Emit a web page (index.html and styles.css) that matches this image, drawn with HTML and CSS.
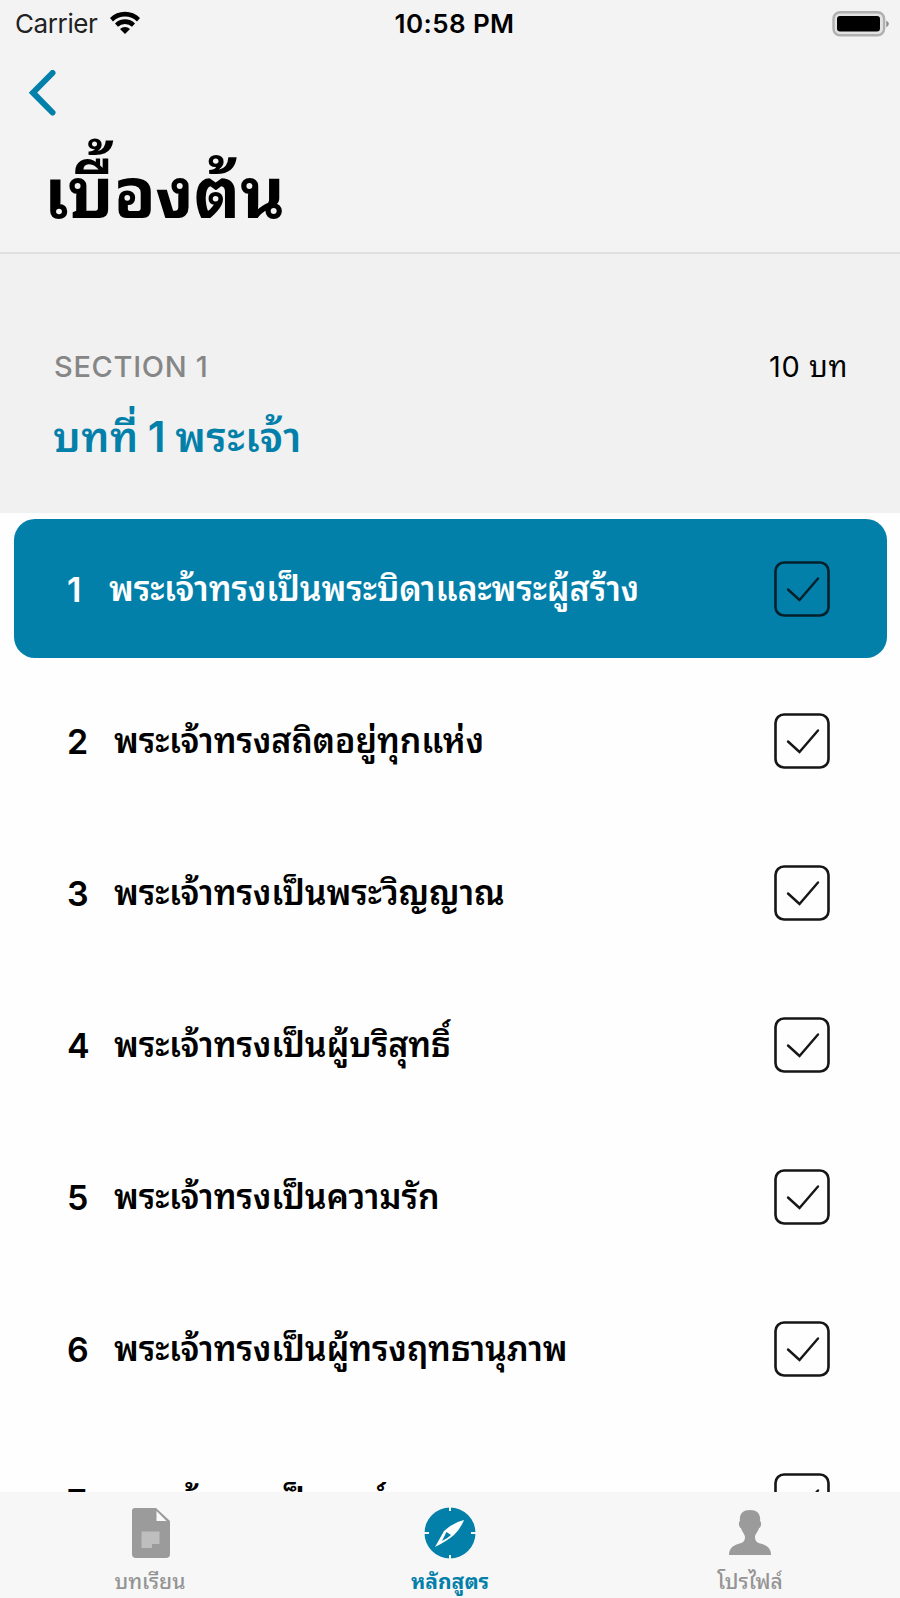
FILE: index.html
```html
<!DOCTYPE html>
<html lang="th">
<head>
    <meta charset="UTF-8">
    <meta name="viewport" content="width=device-width, initial-scale=1.0">
    <title>เบื้องต้น</title>
    <link rel="stylesheet" href="styles.css">
</head>
<body>
    <svg class="sprite" width="0" height="0">
        <symbol id="check" viewBox="0 0 56 56">
            <rect x="1.5" y="1.5" width="53" height="53" rx="8.5" fill="none" stroke="currentColor" stroke-width="2.6"/>
            <path d="M14 28.5 L25.5 39 L44 17.5" fill="none" stroke="currentColor" stroke-width="2.4" stroke-linecap="round"/>
        </symbol>
    </svg>
    <div class="app">
        <header class="header">
            <div class="status">
                <div class="carrier">
                    <span>Carrier</span>
                    <svg width="32" height="24" viewBox="0 0 32 24">
                        <path d="M1 7 A21 21 0 0 1 31 7 L28 10.500 A17 17 0 0 0 4 10.500 Z"/>
                        <path d="M6 12.500 A14 14 0 0 1 26 12.500 L23 15.800 A10 10 0 0 0 9 15.800 Z"/>
                        <path d="M11 18 A7.500 7.500 0 0 1 21 18 L16 23 Z"/>
                    </svg>
                </div>
                <span class="clock">10:58 PM</span>
                <svg class="battery" width="58" height="26" viewBox="0 0 58 26">
                    <rect x="1.5" y="1.2" width="50.6" height="23" rx="6.5" fill="#e2e2e2" stroke="#b0b0b0" stroke-width="2.4"/>
                    <rect x="5" y="5" width="43" height="15.5" rx="3"/>
                    <path d="M54.3 9.5 Q59.5 12.7 54.3 16.5 Z" fill="#8b8b8b"/>
                </svg>
            </div>
            <div class="back">
                <svg width="28" height="46" viewBox="0 0 28 46">
                    <path d="M23.500 3 L4 22.700 L23.500 42.500" fill="none" stroke="#0280aa" stroke-width="6" stroke-linecap="round"/>
                </svg>
            </div>
            <h1>เบื้องต้น</h1>
        </header>

        <section class="section">
            <div class="section-top">
                <span class="section-label">SECTION 1</span>
                <span class="section-count">10 บท</span>
            </div>
            <h2>บทที่ 1 พระเจ้า</h2>
        </section>

        <main class="list">
            <div class="row active">
                <span class="num">1</span>
                <span class="name">พระเจ้าทรงเป็นพระบิดาและพระผู้สร้าง</span>
                <svg class="check"><use href="#check"/></svg>
            </div>
            <div class="row">
                <span class="num">2</span>
                <span class="name">พระเจ้าทรงสถิตอยู่ทุกแห่ง</span>
                <svg class="check"><use href="#check"/></svg>
            </div>
            <div class="row">
                <span class="num">3</span>
                <span class="name">พระเจ้าทรงเป็นพระวิญญาณ</span>
                <svg class="check"><use href="#check"/></svg>
            </div>
            <div class="row">
                <span class="num">4</span>
                <span class="name">พระเจ้าทรงเป็นผู้บริสุทธิ์</span>
                <svg class="check"><use href="#check"/></svg>
            </div>
            <div class="row">
                <span class="num">5</span>
                <span class="name">พระเจ้าทรงเป็นความรัก</span>
                <svg class="check"><use href="#check"/></svg>
            </div>
            <div class="row">
                <span class="num">6</span>
                <span class="name">พระเจ้าทรงเป็นผู้ทรงฤทธานุภาพ</span>
                <svg class="check"><use href="#check"/></svg>
            </div>
            <div class="row">
                <span class="num">7</span>
                <span class="name">พระเจ้าทรงเป็นองค์</span>
                <svg class="check"><use href="#check"/></svg>
            </div>
        </main>

        <nav class="tabs">
            <div class="tab">
                <svg width="52" height="52" viewBox="0 0 52 52">
                    <path d="M11 1 H32 L46 14 V47 Q46 51 42 51 H12 Q8 51 8 47 V4 Q8 1 11 1 Z" fill="#9b9b9b"/>
                    <path d="M32.500 4 V14 H42.500 Z" fill="#fafafa"/>
                    <path d="M17.500 24.500 H35.500 V37 H28 V41 H17.500 Z" fill="#bebebe"/>
                </svg>
                <span>บทเรียน</span>
            </div>
            <div class="tab selected">
                <svg width="52" height="52" viewBox="0 0 52 52">
                    <circle cx="26" cy="26" r="25.500" fill="#0280aa"/>
                    <path d="M26 0 V4 M26 48 V52 M0 26 H5 M47 26 H52" stroke="#f6f6f6" stroke-width="2"/>
                    <path d="M40 13 Q30 15 20 24 L11 40 Q23 34 30 28 Q37 21 40 13 Z" fill="#fff"/>
                    <path d="M22.500 25 L27 28 Q24 31 18 34 Z" fill="#0280aa"/>
                </svg>
                <span>หลักสูตร</span>
            </div>
            <div class="tab">
                <svg width="52" height="52" viewBox="0 0 52 52">
                    <path d="M26 3 C33 3 37 7 36 14 C38 15 37 21 35 21 C34 25 31 27 31 30 C31 35 34 36 38 37 C44 39 47 42 47 48 H5 C5 42 8 39 14 37 C18 36 21 35 21 30 C21 27 18 25 17 21 C15 21 14 15 16 14 C15 7 19 3 26 3 Z" fill="#9b9b9b"/>
                </svg>
                <span>โปรไฟล์</span>
            </div>
        </nav>
    </div>
</body>
</html>
```
FILE: styles.css
```css
* {
    box-sizing: border-box;
}

body {
    margin: 0;
    background-color: #fff;
    color: #000;
    font-family: Inter, Thonburi, "Noto Sans Thai Looped", Loma, Garuda, "Noto Sans Thai", "Liberation Sans", sans-serif;
}

.sprite {
    display: none;
}

.app {
    display: flex;
    flex-direction: column;
    width: 900px;
    height: 1598px;
    overflow: hidden;
    background-color: #fefefe;
}

/* ---------- header ---------- */
.header {
    flex: none;
    height: 254px;
    background-color: #f3f3f3;
    border-bottom: 2px solid #e0e0e0;
}

.status {
    display: grid;
    grid-template-columns: 1fr auto 1fr;
    align-items: center;
    height: 47px;
    padding: 0 10px 0 15px;
    font-size: 26px;
}

.carrier {
    display: flex;
    align-items: center;
    gap: 12px;
    color: #222;
    letter-spacing: -0.4px;
}

.carrier svg {
    margin-bottom: 2px;
}

.clock {
    padding-left: 4px;
    font-weight: 600;
    letter-spacing: 0.4px;
}

.battery {
    justify-self: end;
}

.back {
    height: 46px;
    margin-top: 23px;
    padding-left: 29px;
}

h1 {
    margin: 17px 0 0;
    padding-left: 44px;
    font-size: 69px;
    line-height: 120px;
    font-weight: 700;
    letter-spacing: -0.3px;
}

/* ---------- section ---------- */
.section {
    flex: none;
    height: 259px;
    padding: 93px 52px 0 53px;
    background-color: #f1f1f1;
}

.section-top {
    display: flex;
    justify-content: space-between;
    font-size: 29px;
    line-height: 40px;
}

.section-label {
    padding-left: 1px;
    color: #868686;
    font-weight: 500;
    letter-spacing: 0.7px;
}

.section-count {
    letter-spacing: 0.6px;
}

h2 {
    margin: 20px 0 0;
    color: #0280aa;
    font-size: 42px;
    line-height: 60px;
    font-weight: 600;
    letter-spacing: 0.5px;
    word-spacing: -2px;
}

/* ---------- list ---------- */
.list {
    flex: 1;
    display: flex;
    flex-direction: column;
    gap: 13px;
    min-height: 0;
    padding: 6px 13px 0 14px;
    overflow: hidden;
}

.row {
    flex: none;
    display: flex;
    align-items: center;
    height: 139px;
    padding: 0 57px 0 53px;
    border-radius: 21px;
    font-size: 34px;
    font-weight: 600;
    white-space: nowrap;
}

.row.active {
    background-color: #0280aa;
    color: #fff;
}

.num {
    width: 47px;
    margin-top: 2px;
}

.name {
    margin-bottom: 6px;
    letter-spacing: -0.1px;
}

.active .num {
    width: 42px;
}

.check {
    width: 56px;
    height: 56px;
    margin-left: auto;
    color: #161616;
}

.active .check {
    color: #03202b;
}

/* ---------- tab bar ---------- */
.tabs {
    flex: none;
    display: flex;
    height: 106px;
    background-color: #f7f7f7;
}

.tab {
    flex: 1;
    display: flex;
    flex-direction: column;
    align-items: center;
    padding-top: 15px;
    color: #949494;
    font-size: 21px;
    line-height: 30px;
    font-weight: 500;
}

.tab span {
    margin-top: 8px;
}

.selected {
    color: #0280aa;
    font-weight: 700;
}
```
